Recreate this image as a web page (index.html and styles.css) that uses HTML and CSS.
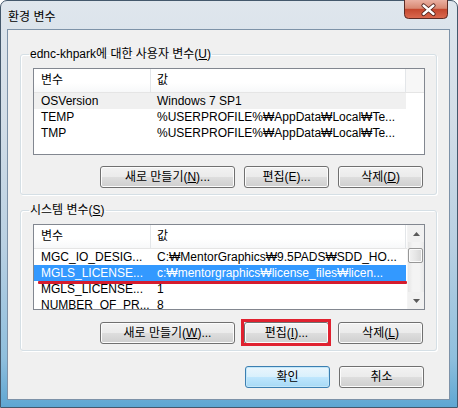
FILE: index.html
```html
<!DOCTYPE html>
<html lang="ko">
<head>
<meta charset="utf-8">
<title>환경 변수</title>
<link rel="stylesheet" href="styles.css">
</head>
<body>
<div class="window">
  <div class="titlebar">
    <span class="title">환경 변수</span>
    <div class="close">
      <svg width="44" height="19" viewBox="0 0 44 19">
        <defs>
          <linearGradient id="cg" x1="0" y1="0" x2="0" y2="1">
            <stop offset="0" stop-color="#eab0a2"/>
            <stop offset="0.45" stop-color="#d88872"/>
            <stop offset="0.5" stop-color="#c4472e"/>
            <stop offset="1" stop-color="#db6a50"/>
          </linearGradient>
        </defs>
        <path d="M0.5 0 V14.5 Q0.5 18.5 4.5 18.5 H39.5 Q43.5 18.5 43.5 14.5 V0" fill="url(#cg)" stroke="#5b2b25"/>
        <path d="M19.5 5.5 L29.5 14 M29.5 5.5 L19.5 14" stroke="#4b1d17" stroke-width="4.2" stroke-linecap="round"/>
        <path d="M19.5 5.5 L29.5 14 M29.5 5.5 L19.5 14" stroke="#fff" stroke-width="2.4" stroke-linecap="round"/>
      </svg>
    </div>
  </div>
  <div class="client">
    <fieldset class="group">
      <legend>ednc-khpark에 대한 사용자 변수(<u>U</u>)</legend>
      <div class="list">
        <div class="row head"><span class="c1">변수</span><span class="c2">값</span><span class="fill"></span></div>
        <div class="row sel-grey"><span class="c1">OSVersion</span><span class="c2">Windows 7 SP1</span></div>
        <div class="row"><span class="c1">TEMP</span><span class="c2">%USERPROFILE%₩AppData₩Local₩Te...</span></div>
        <div class="row"><span class="c1">TMP</span><span class="c2">%USERPROFILE%₩AppData₩Local₩Te...</span></div>
      </div>
      <div class="btnrow">
        <button class="btn wide">새로 만들기(<u>N</u>)...</button>
        <button class="btn">편집(E)...</button>
        <button class="btn">삭제(<u>D</u>)</button>
      </div>
    </fieldset>
    <fieldset class="group second">
      <legend>시스템 변수(<u>S</u>)</legend>
      <div class="list list2">
        <div class="rows">
          <div class="row head"><span class="c1">변수</span><span class="c2">값</span></div>
          <div class="row"><span class="c1">MGC_IO_DESIG...</span><span class="c2">C:₩MentorGraphics₩9.5PADS₩SDD_HO...</span></div>
          <div class="row sel-blue"><span class="c1">MGLS_LICENSE...</span><span class="c2">c:₩mentorgraphics₩license_files₩licen...</span></div>
          <div class="row"><span class="c1">MGLS_LICENSE...</span><span class="c2">1</span></div>
          <div class="row"><span class="c1">NUMBER_OF_PR...</span><span class="c2">8</span></div>
        </div>
        <div class="vscroll">
          <div class="arrow up"><svg width="7" height="4" viewBox="0 0 7 4"><path d="M0 4 L3.5 0 L7 4Z" fill="#5a5a5a"/></svg></div>
          <div class="track"><div class="thumb"></div></div>
          <div class="arrow down"><svg width="7" height="4" viewBox="0 0 7 4"><path d="M0 0 L3.5 4 L7 0Z" fill="#5a5a5a"/></svg></div>
        </div>
      </div>
      <div class="btnrow">
        <button class="btn wide">새로 만들기(<u>W</u>)...</button>
        <button class="btn marked">편집(<u>I</u>)...</button>
        <button class="btn">삭제(<u>L</u>)</button>
      </div>
    </fieldset>
    <div class="okrow">
      <button class="btn default">확인</button>
      <button class="btn">취소</button>
    </div>
  </div>
</div>
</body>
</html>
```
FILE: styles.css
```css
html, body {
  margin: 0;
  padding: 0;
}
body {
  width: 458px;
  height: 408px;
  overflow: hidden;
  font-family: "Liberation Sans", "Noto Sans CJK KR", sans-serif;
  font-size: 12px;
  color: #000;
  background: #fff;
}
.window {
  box-sizing: border-box;
  width: 458px;
  height: 408px;
  border: 1px solid #44586c;
  border-radius: 7px 7px 0 0;
  background: linear-gradient(180deg, #dfe6ed 0%, #d2dde7 30%, #b9d0e2 60%, #8fbfdd 88%, #5ea6d2 100%);
  display: flex;
  flex-direction: column;
}
.titlebar {
  height: 28px;
  display: flex;
  justify-content: space-between;
  align-items: flex-start;
  padding: 0 9px 0 7px;
}
.title {
  margin-top: 9px;
  font-size: 12px;
  line-height: 14px;
  color: #000;
}
.close {
  height: 19px;
  margin-top: -1px;
}
.close svg {
  display: block;
}
.client {
  flex: 1;
  margin: 0 7px 7px 6px;
  border: 1px solid #7d92a8;
  background: #f0f0f0;
  padding: 17px 12px 0 12px;
  display: flex;
  flex-direction: column;
}
.group {
  margin: 0;
  padding: 0 11px 6px 12px;
  border: 1px solid #d5dfe5;
  border-radius: 3px;
  box-shadow: inset 1px 1px 0 #fff, 1px 1px 0 #fff;
}
.group.second {
  margin-top: 8px;
}
.group legend {
  margin-left: -4px;
  padding: 0 1px;
  line-height: 14px;
  height: 14px;
}
.list {
  box-sizing: border-box;
  height: 87px;
  margin-top: 7px;
  border: 1px solid #828790;
  background: #fff;
  overflow: hidden;
  position: relative;
}
.list2 {
  height: 86px;
  display: flex;
}
.rows {
  flex: 1;
  min-width: 0;
}
.row {
  display: flex;
  height: 16px;
  line-height: 16px;
  white-space: nowrap;
}
.row .c1 {
  width: 117px;
  box-sizing: border-box;
  padding-left: 7px;
  overflow: hidden;
}
.row .c2 {
  width: 255px;
  box-sizing: border-box;
  padding-left: 6px;
  overflow: hidden;
}
.row.head {
  height: 24px;
  line-height: 23px;
  background: linear-gradient(180deg, #ffffff 0%, #ffffff 60%, #f7f8f9 100%);
  border-bottom: 1px solid #e5e5e5;
  box-sizing: border-box;
}
.row.head .c1,
.row.head .c2 {
  border-right: 1px solid #e3e6e9;
}
.row.head .fill {
  flex: 1;
  background: #f7f7f7;
}
.sel-grey .c1,
.sel-grey .c2 {
  background: #f0f0f0;
}
.sel-blue {
  position: relative;
}
.sel-blue .c1,
.sel-blue .c2 {
  background: #3399ff;
  color: #fff;
}
.sel-blue::after {
  content: "";
  position: absolute;
  left: 4px;
  width: 369px;
  top: 16px;
  height: 3px;
  background: #d51c2e;
  border-radius: 1px;
}
.vscroll {
  width: 17px;
  display: flex;
  flex-direction: column;
  background: #f1f1f1;
  border-left: 1px solid #f4f4f4;
  box-sizing: border-box;
}
.arrow {
  height: 17px;
  display: flex;
  align-items: center;
  justify-content: center;
}
.track {
  flex: 1;
  padding-top: 6px;
  background: linear-gradient(90deg, #e6e6e6 0%, #f4f4f4 30%, #f4f4f4 70%, #e9e9e9 100%);
}
.thumb {
  height: 15px;
  margin: 0 1px 0 0;
  box-sizing: border-box;
  border: 1px solid #979797;
  border-radius: 2px;
  background: linear-gradient(90deg, #f2f2f2 0%, #e6e6e6 50%, #d6d6d6 100%);
  box-shadow: inset 0 0 0 1px #fbfbfb;
}
.btnrow {
  display: flex;
  justify-content: flex-end;
  gap: 9px;
  margin-top: 11px;
  padding-right: 2px;
}
.second .btnrow {
  margin-top: 12px;
}
.btn {
  box-sizing: border-box;
  width: 85px;
  height: 22px;
  margin: 0;
  padding: 0;
  font: inherit;
  line-height: 20px;
  color: #000;
  text-align: center;
  border: 1px solid #707070;
  border-radius: 3px;
  background: linear-gradient(180deg, #f2f2f2 0%, #ebebeb 48%, #dddddd 52%, #cfcfcf 100%);
  box-shadow: inset 0 0 0 1px #fcfcfc;
}
.btn.wide {
  width: 135px;
}
.btn.marked {
  position: relative;
}
.btn.marked::after {
  content: "";
  position: absolute;
  left: -4px;
  top: -4px;
  right: -3px;
  bottom: -3px;
  border: 3px solid #e0212f;
}
.btn.default {
  border-color: #3c7fb1;
  background: linear-gradient(180deg, #eaf6fd 0%, #d9f0fc 48%, #bee6fd 52%, #a7d9f5 100%);
  box-shadow: inset 0 0 0 1px #c3e7f9;
}
.okrow {
  display: flex;
  justify-content: flex-end;
  gap: 9px;
  margin-top: 15px;
  padding-right: 13px;
}
```
